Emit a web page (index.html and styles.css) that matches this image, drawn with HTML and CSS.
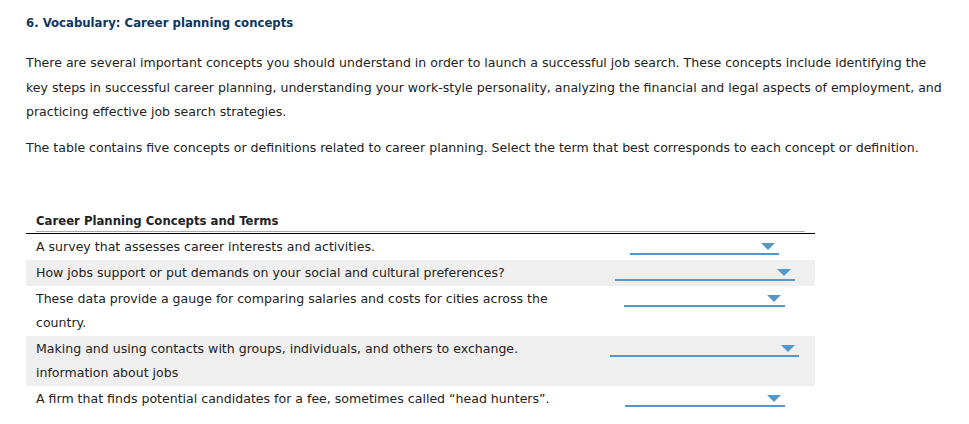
FILE: index.html
```html
<!DOCTYPE html>
<html>
<head>
<meta charset="utf-8">
<link rel="stylesheet" href="styles.css">
</head>
<body>
<div class="page">
  <h1 class="title">6. Vocabulary: Career planning concepts</h1>
  <p class="para">There are several important concepts you should understand in order to launch a successful job search. These concepts include identifying the key steps in successful career planning, understanding your work-style personality, analyzing the financial and legal aspects of employment, and practicing effective job search strategies.</p>
  <p class="para">The table contains five concepts or definitions related to career planning. Select the term that best corresponds to each concept or definition.</p>

  <div class="table">
    <div class="thead"><div class="thead-inner">Career Planning Concepts and Terms</div></div>
    <div class="row">
      <div class="cell-text">A survey that assesses career interests and activities.</div>
      <div class="cell-select"><span class="select" style="width:149px"><span class="arrow"></span></span></div>
    </div>
    <div class="row alt">
      <div class="cell-text">How jobs support or put demands on your social and cultural preferences?</div>
      <div class="cell-select"><span class="select" style="width:180px"><span class="arrow"></span></span></div>
    </div>
    <div class="row">
      <div class="cell-text">These data provide a gauge for comparing salaries and costs for cities across the country.</div>
      <div class="cell-select"><span class="select" style="width:161px"><span class="arrow"></span></span></div>
    </div>
    <div class="row alt">
      <div class="cell-text">Making and using contacts with groups, individuals, and others to exchange. information about jobs</div>
      <div class="cell-select"><span class="select" style="width:189px"><span class="arrow"></span></span></div>
    </div>
    <div class="row">
      <div class="cell-text">A firm that finds potential candidates for a fee, sometimes called “head hunters”.</div>
      <div class="cell-select"><span class="select" style="width:160px"><span class="arrow"></span></span></div>
    </div>
  </div>
</div>
</body>
</html>
```

FILE: styles.css
```css
html, body {
  margin: 0;
  padding: 0;
  background: #ffffff;
}
body {
  font-family: "DejaVu Sans", Verdana, sans-serif;
  font-size: 12.55px;
  color: #222222;
}
.page {
  padding: 15px 18px 0 26px;
}
.title {
  margin: 0;
  font-size: 11.7px;
  line-height: 16px;
  font-weight: bold;
  color: #10365f;
}
.para {
  margin: 20px 0 0 0;
  line-height: 24.5px;
}
.para + .para {
  margin-top: 11px;
}
.table {
  margin-top: 50px;
  width: 789px;
}
.thead {
  padding: 0 10px 1px 10px;
  border-bottom: 1px solid #000000;
}
.thead-inner {
  font-size: 11.7px;
  font-weight: bold;
  padding-top: 2px;
  line-height: 19px;
  border-bottom: 1px solid #aaaaaa;
}
.row {
  display: grid;
  grid-template-columns: 568px 221px;
}
.row.alt {
  background: #efefef;
}
.cell-text {
  padding: 1px 10px;
  line-height: 24px;
}
.cell-select {
  display: flex;
  justify-content: center;
  align-items: flex-start;
}
.select {
  position: relative;
  display: block;
  height: 19px;
  border-bottom: 2px solid #5596cb;
}
.arrow {
  position: absolute;
  right: 4px;
  top: 9px;
  width: 0;
  height: 0;
  border-left: 7px solid transparent;
  border-right: 7px solid transparent;
  border-top: 7px solid #5596cb;
}
```
